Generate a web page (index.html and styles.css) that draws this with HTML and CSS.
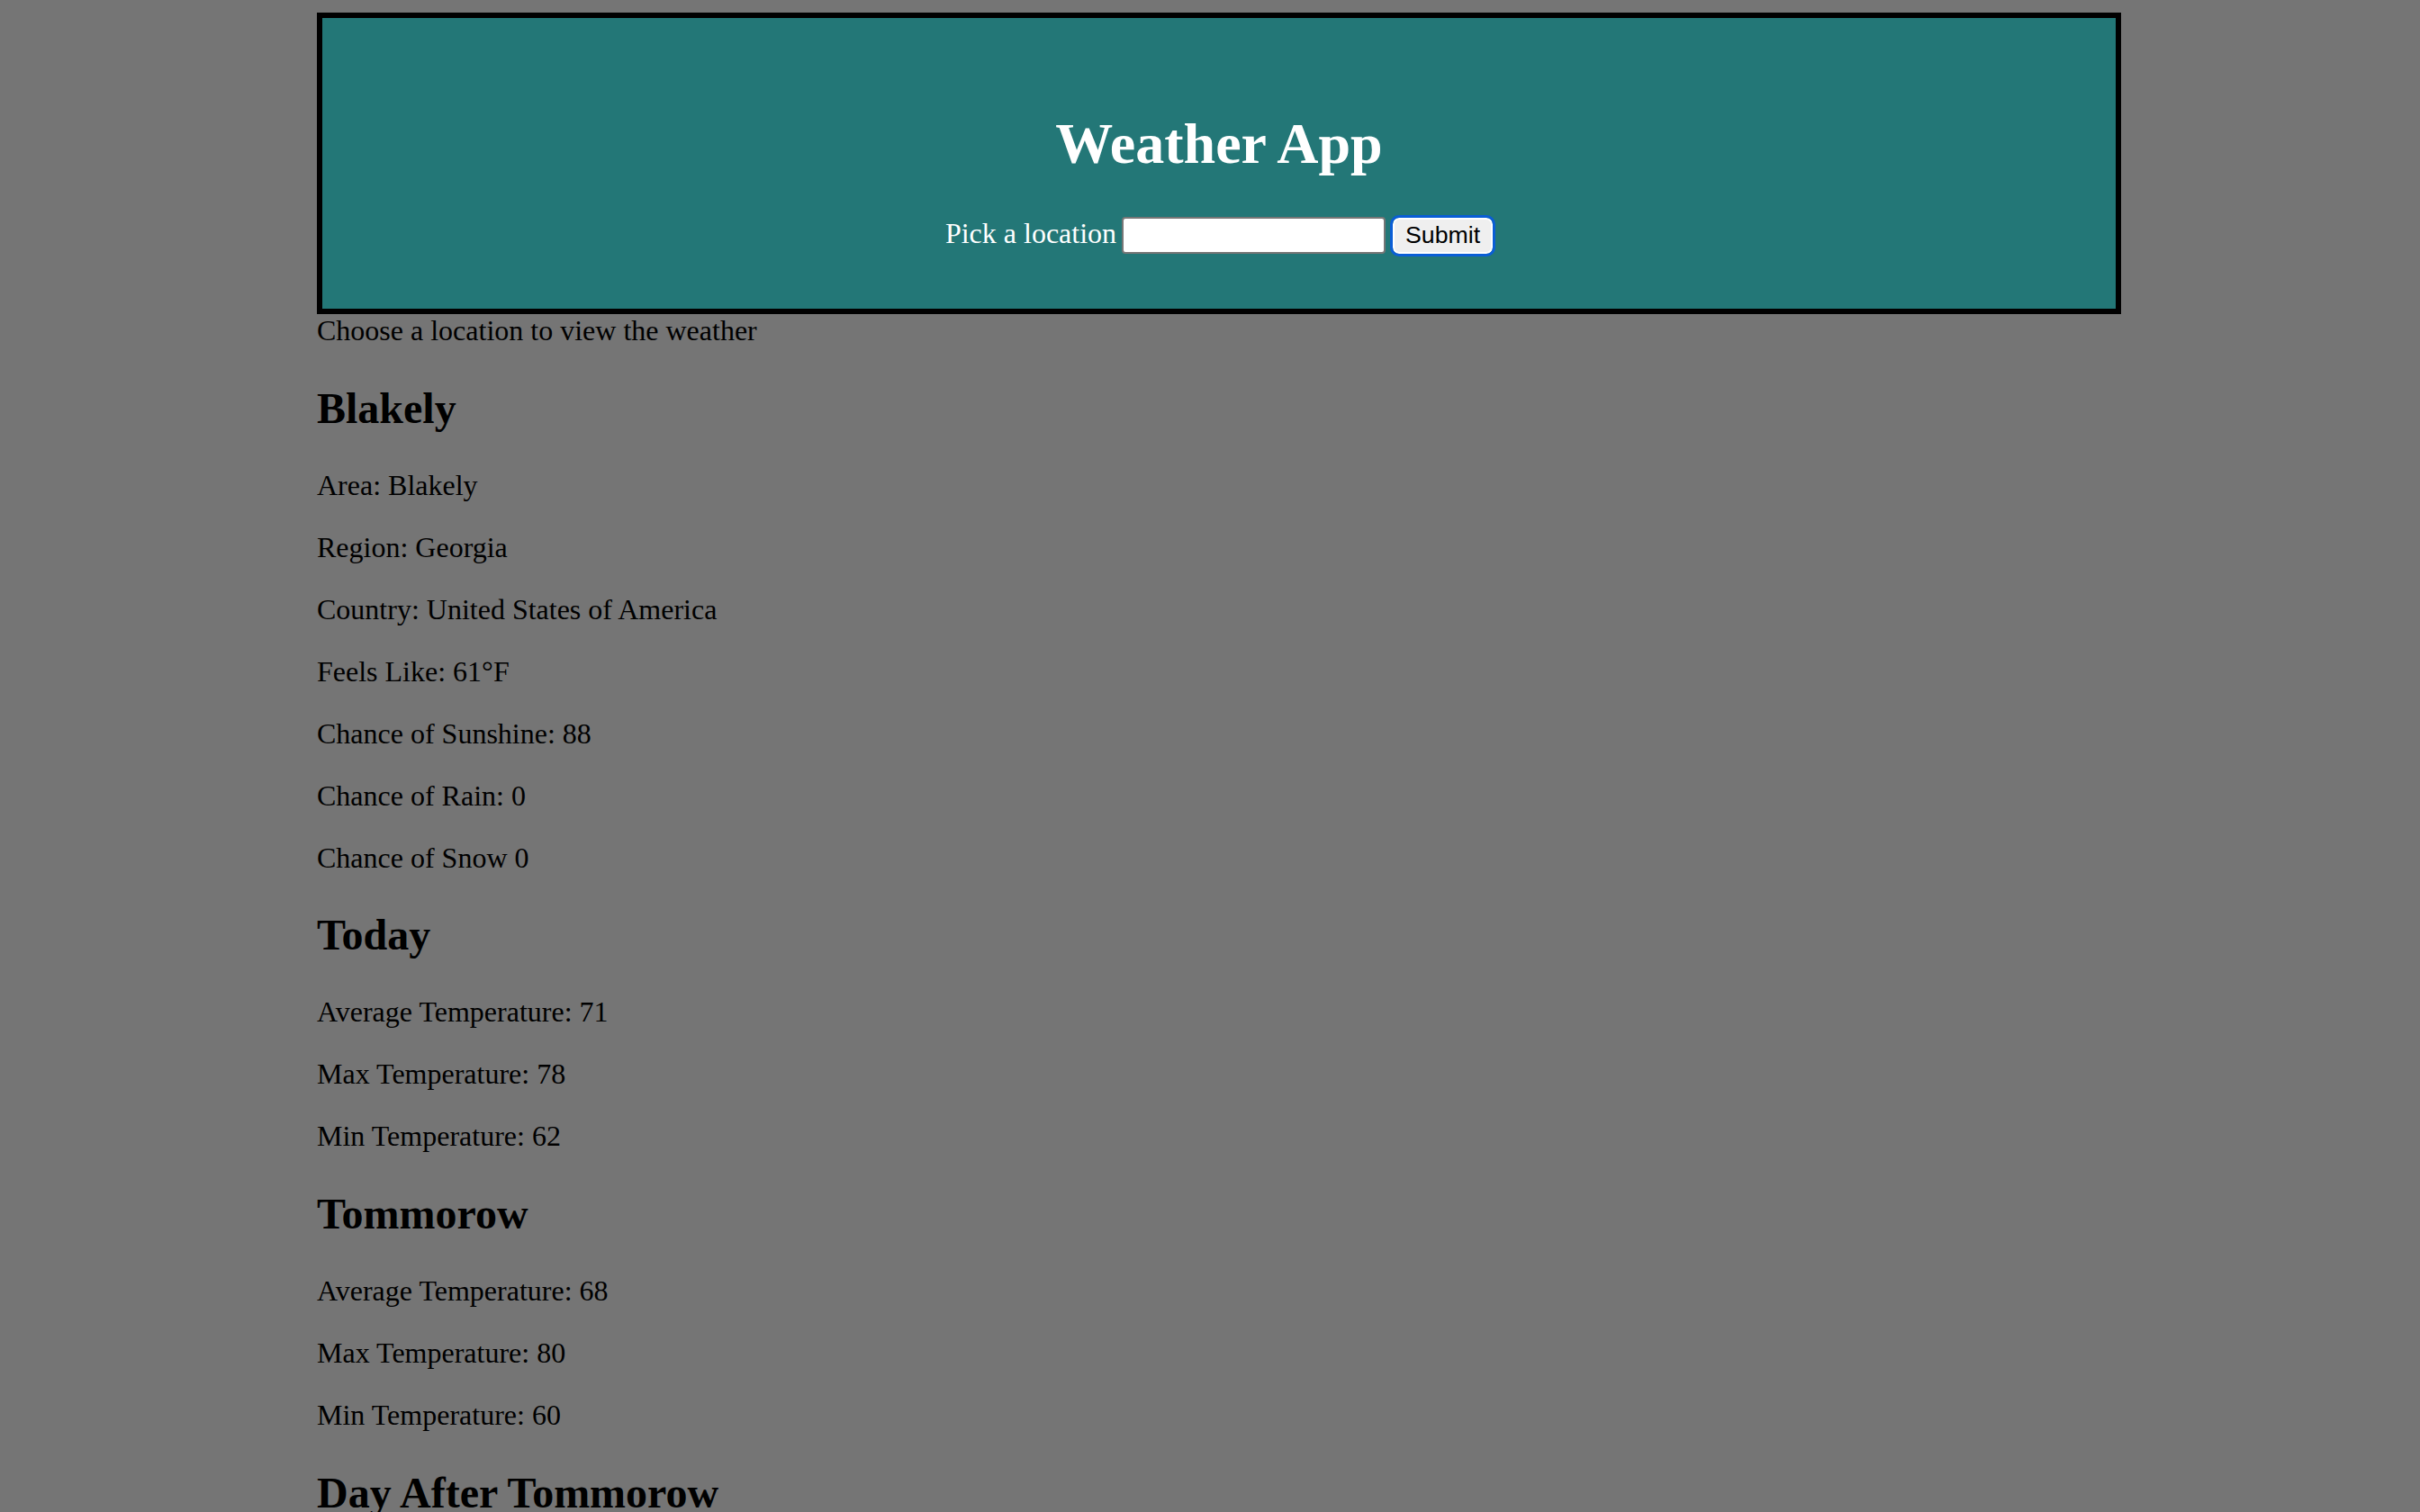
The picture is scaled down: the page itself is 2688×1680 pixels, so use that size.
FILE: index.html
```html
<!DOCTYPE html>
<html lang="en">
<head>
<meta charset="utf-8">
<title>Weather App</title>
<link rel="stylesheet" href="styles.css">
</head>
<body>
<div class="page">
  <header class="banner">
    <h1 class="title">Weather App</h1>
    <form class="search">
      <label class="search-label" for="loc">Pick a location</label>
      <input class="search-input" id="loc" type="text">
      <button class="search-btn" type="button">Submit</button>
    </form>
  </header>
  <p class="intro">Choose a location to view the weather</p>

  <section class="block">
    <h2 class="heading">Blakely</h2>
    <p class="line">Area: Blakely</p>
    <p class="line">Region: Georgia</p>
    <p class="line">Country: United States of America</p>
    <p class="line">Feels Like: 61°F</p>
    <p class="line">Chance of Sunshine: 88</p>
    <p class="line">Chance of Rain: 0</p>
    <p class="line">Chance of Snow 0</p>
  </section>

  <section class="block">
    <h2 class="heading">Today</h2>
    <p class="line">Average Temperature: 71</p>
    <p class="line">Max Temperature: 78</p>
    <p class="line">Min Temperature: 62</p>
  </section>

  <section class="block">
    <h2 class="heading">Tommorow</h2>
    <p class="line">Average Temperature: 68</p>
    <p class="line">Max Temperature: 80</p>
    <p class="line">Min Temperature: 60</p>
  </section>

  <section class="block">
    <h2 class="heading">Day After Tommorow</h2>
    <p class="line">Average Temperature: 70</p>
    <p class="line">Max Temperature: 79</p>
    <p class="line">Min Temperature: 61</p>
  </section>
</div>
</body>
</html>
```

FILE: styles.css
```css
html, body {
  margin: 0;
  padding: 0;
}

body {
  background: #757575;
  color: #000;
  font-family: "Liberation Serif", "Times New Roman", serif;
  font-size: 32px;
  padding-top: 14px;
}

.page {
  margin-left: 352px;
  width: 2004px;
}

.banner {
  box-sizing: border-box;
  width: 2004px;
  background: #237777;
  border: 6px solid #000;
  padding: 60px 0 60.5px;
  text-align: center;
  color: #fff;
}

.title {
  font-size: 64px;
  font-weight: bold;
  margin: 42.88px 0 44.5px;
}

.search {
  margin: 0;
}

.search-label {
  color: #fff;
  margin-right: -2px;
}

.search-input {
  box-sizing: border-box;
  width: 293px;
  height: 41px;
  font-family: "Liberation Sans", Arial, sans-serif;
  font-size: 26.67px;
  padding: 2px 4px;
  border: 2px solid #767676;
  border-radius: 4px;
  background: #fff;
  vertical-align: baseline;
}

.search-btn {
  box-sizing: border-box;
  height: 40px;
  font-family: "Liberation Sans", Arial, sans-serif;
  font-size: 26.67px;
  line-height: normal;
  padding: 0 12px;
  color: #000;
  background: #efefef;
  border: 2px solid #fff;
  border-radius: 7px;
  outline: 3px solid #0a5ed6;
  outline-offset: 0;
}

.intro {
  margin: 0;
}

.block {
  margin: 0;
}

.heading {
  font-size: 48px;
  font-weight: bold;
  margin: 39.84px 0;
}

.line {
  margin: 32px 0;
}
```
